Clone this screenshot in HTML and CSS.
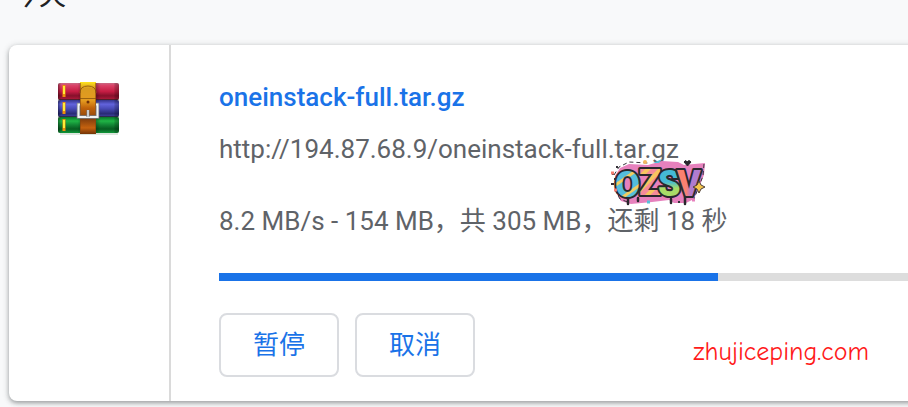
FILE: index.html
```html
<!DOCTYPE html>
<html lang="zh-CN">
<head>
    <meta charset="UTF-8">
    <meta name="viewport" content="width=device-width, initial-scale=1.0">
    <title>下载内容</title>
    <link rel="stylesheet" href="styles.css">
</head>
<body>
    <h2 class="date">今天</h2>
    <div class="card">
        <div class="file-icon">
            <svg width="64" height="54" viewBox="0 0 64 54" aria-hidden="true">
                <defs>
                    <linearGradient id="red" x2="0" y2="1">
                        <stop offset="0" stop-color="#c96a84"/>
                        <stop offset=".15" stop-color="#da4167"/>
                        <stop offset=".5" stop-color="#c51d43"/>
                        <stop offset=".75" stop-color="#86102b"/>
                        <stop offset="1" stop-color="#b51b3d"/>
                    </linearGradient>
                    <linearGradient id="blue" x2="0" y2="1">
                        <stop offset="0" stop-color="#34358c"/>
                        <stop offset=".25" stop-color="#6263dc"/>
                        <stop offset=".5" stop-color="#494bb7"/>
                        <stop offset=".8" stop-color="#292b76"/>
                        <stop offset="1" stop-color="#4142a2"/>
                    </linearGradient>
                    <linearGradient id="green" x2="0" y2="1">
                        <stop offset="0" stop-color="#087329"/>
                        <stop offset=".25" stop-color="#20b545"/>
                        <stop offset=".5" stop-color="#128534"/>
                        <stop offset=".75" stop-color="#075c20"/>
                        <stop offset="1" stop-color="#11983a"/>
                    </linearGradient>
                    <linearGradient id="belt" x2="0" y2="1">
                        <stop offset="0" stop-color="#ffe51c"/>
                        <stop offset=".12" stop-color="#d99b20"/>
                        <stop offset=".36" stop-color="#e49b20"/>
                        <stop offset=".5" stop-color="#c0620a"/>
                        <stop offset=".72" stop-color="#85400d"/>
                        <stop offset=".88" stop-color="#c5620f"/>
                        <stop offset="1" stop-color="#733407"/>
                    </linearGradient>
                    <linearGradient id="ends">
                        <stop offset="0" stop-color="#000" stop-opacity=".4"/>
                        <stop offset=".05" stop-color="#000" stop-opacity="0"/>
                        <stop offset=".32" stop-color="#000" stop-opacity="0"/>
                        <stop offset=".38" stop-color="#000" stop-opacity=".2"/>
                        <stop offset=".62" stop-color="#000" stop-opacity=".3"/>
                        <stop offset=".7" stop-color="#000" stop-opacity="0"/>
                        <stop offset=".92" stop-color="#000" stop-opacity="0"/>
                        <stop offset=".93" stop-color="#000" stop-opacity=".15"/>
                        <stop offset="1" stop-color="#000" stop-opacity=".3"/>
                    </linearGradient>
                </defs>
                <rect x="3" y="51" width="58" height="2" fill="#dce5dd"/>
                <rect x="1" y="1" width="61" height="17" rx="2" fill="url(#red)"/>
                <rect x="1" y="18" width="61" height="17" rx="2" fill="url(#blue)"/>
                <rect x="1" y="35" width="61" height="16" rx="2" fill="url(#green)"/>
                <rect x="1" y="1" width="61" height="50" rx="2" fill="url(#ends)"/>
                <path d="M2 17.5h59M2 34.5h59" stroke="#222" stroke-opacity=".65"/>
                <path d="M7 3v12M7 20v12M7 37v12" stroke="#ef8d0b" stroke-width="3"/>
                <path d="M7 4v8M7 21v8M7 38v8" stroke="#ffec36" stroke-width="2"/>
                <rect x="23" y="0" width="16" height="52" fill="url(#belt)"/>
                <path d="M23 11q0-7 8-7t8 7M23 16.5h16" fill="none" stroke="#9a620f"/>
                <path d="M23.5 1v50M38.5 1v50" stroke="#83460d" stroke-opacity=".6"/>
                <circle cx="31" cy="20" r="1.5" fill="#713008"/>
                <path d="M23 22.5h-1.5v12.5h19V22.5H39" fill="none" stroke="#777e85" stroke-width="3.5"/>
                <path d="M23 22.5h-1.5v12.5h19V22.5H39" fill="none" stroke="#f0f2f4" stroke-width="2"/>
                <path d="M31 28v7" stroke="#75777d" stroke-width="3"/>
                <path d="M31 28v7" stroke="#e5e7ea" stroke-width="1.5"/>
            </svg>
        </div>
        <div class="details">
            <a class="name" href="#">oneinstack-full.tar.gz</a>
            <div class="url">
                http://194.87.68.9/oneinstack-full.tar.gz
                <svg class="badge" width="96" height="48" viewBox="0 0 96 48" role="img" aria-label="OZSV">
                    <defs>
                        <pattern id="fill-o" width="14" height="14" patternUnits="userSpaceOnUse" patternTransform="rotate(-35)">
                            <rect width="14" height="14" fill="#55bddb"/>
                            <rect y="9" width="14" height="3" fill="#f1cd62"/>
                        </pattern>
                        <pattern id="fill-z" width="9" height="9" patternUnits="userSpaceOnUse" patternTransform="rotate(-45)">
                            <rect width="9" height="9" fill="#f58b9a"/>
                            <rect y="5" width="9" height="4" fill="#f7c55f"/>
                        </pattern>
                        <linearGradient id="fill-s" x2="0" y2="1">
                            <stop offset=".45" stop-color="#45bad5"/>
                            <stop offset=".6" stop-color="#a8dc68"/>
                        </linearGradient>
                        <linearGradient id="fill-v">
                            <stop offset=".4" stop-color="#fb8170"/>
                            <stop offset=".6" stop-color="#b07cd0"/>
                        </linearGradient>
                    </defs>
                    <path d="M5 17l5-8 9-4 19 1 14-4 16 1 6 3 21-2-1 12-10 24-8 4H64l-5-3-17 2-21 2-10-3-6-10z" fill="#e681bd"/>
                    <path d="M4 16l5-8 10-5 19 1M94 5l-1 12-9 23M5 31l5 9 10 4" fill="none" stroke="#39333d" stroke-dasharray="4 3"/>
                    <text x="5" y="38" fill="url(#fill-o)">O</text>
                    <text x="29" y="36" fill="url(#fill-z)">Z</text>
                    <text x="48" y="37" fill="url(#fill-s)">S</text>
                    <text x="67" y="37" fill="url(#fill-v)">V</text>
                    <path d="M18 40v5M28 39v3M61 40v4M75 38v7" stroke="#29282d" stroke-width="2.5" stroke-linecap="round"/>
                    <path d="M74 3q2-3 3 0 2-3 4 0l-3.5 4z" fill="#29282d" stroke="#29282d"/>
                    <path d="M43 4l9-4-3 4z" fill="#54c1da"/>
                    <circle cx="35" cy="3" r="2" fill="#f4b75c"/>
                    <path d="M89 22l2 4 4 2-4 2-2 4-2-4-4-2 4-2z" fill="#f5c54d" stroke="#4e3f38"/>
                    <path d="M2 15h2M4 20h2M1 25h3M4 31h2M8 36h2M6 8h2M82 41h2M68 43h2" stroke="#333038" stroke-width="2"/>
                    <path d="M1 14h3M4 31h3" stroke="#f47c70" stroke-width="3"/>
                    <path d="M37 43h3" stroke="#54c1da" stroke-width="3"/>
                    <path d="M82 41h3" stroke="#e681bd" stroke-width="3"/>
                </svg>
            </div>
            <div class="status">8.2 MB/s - 154 MB，共 305 MB，还剩 18 秒</div>
            <progress class="progress" value="724" max="1000" aria-label="下载进度"></progress>
            <div class="actions">
                <button class="btn" type="button">暂停</button>
                <button class="btn" type="button">取消</button>
                <span class="site">zhujiceping.com</span>
            </div>
        </div>
    </div>
</body>
</html>
```
FILE: styles.css
```css
* {
    box-sizing: border-box;
}

html {
    overflow: hidden;
    background-color: #f8f9fa;
}

body {
    display: flow-root;
    margin: 0;
    padding-bottom: 16px;
    overflow: hidden;
    color: #5f6368;
    font-family: Roboto, "Noto Sans CJK SC", sans-serif;
    font-size: 26px;
    line-height: 32px;
}

.date {
    margin: -20px 0 33px 12px;
    color: #202124;
    font-size: 27px;
    font-weight: 400;
}

.card {
    display: flex;
    margin: 0 -12px 0 9px;
    background-color: white;
    border-radius: 8px;
    box-shadow: 0 2px 4px rgba(60, 64, 67, 0.4), 0 1px 6px 1px rgba(60, 64, 67, 0.15);
}

.file-icon {
    flex: none;
    width: 162px;
    padding: 37px 48px;
    border-right: 2px solid #dadada;
}

.file-icon svg {
    display: block;
}

.details {
    flex: 1;
    padding: 36px 12px 24px 48px;
}

.name {
    display: block;
    color: #1a73e8;
    font-weight: 500;
    text-decoration: none;
}

.url {
    position: relative;
    margin-top: 20px;
}

.badge {
    position: absolute;
    top: 26px;
    left: 391px;
}

.badge text {
    font-family: Roboto, sans-serif;
    font-size: 36px;
    font-weight: 900;
    paint-order: stroke;
    stroke: #29282d;
    stroke-width: 4px;
    stroke-linejoin: round;
}

.status {
    margin-top: 40px;
}

.progress {
    display: block;
    width: 100%;
    height: 8px;
    margin-top: 36px;
    border: none;
    background-color: #ddd;
    appearance: none;
}

.progress::-webkit-progress-bar {
    background-color: #ddd;
}

.progress::-webkit-progress-value {
    background-color: #1a73e8;
}

.actions {
    display: flex;
    align-items: center;
    gap: 16px;
    margin-top: 32px;
}

.btn {
    width: 120px;
    height: 64px;
    padding: 0;
    border: 2px solid #dadce0;
    border-radius: 8px;
    background-color: white;
    color: #1a73e8;
    font: inherit;
    cursor: pointer;
}

.site {
    margin: 14px 39px 0 auto;
    color: #ff1a1a;
    font-family: "Comic Sans MS", "Comic Neue", "Open Sans", sans-serif;
    font-size: 26px;
}
```
